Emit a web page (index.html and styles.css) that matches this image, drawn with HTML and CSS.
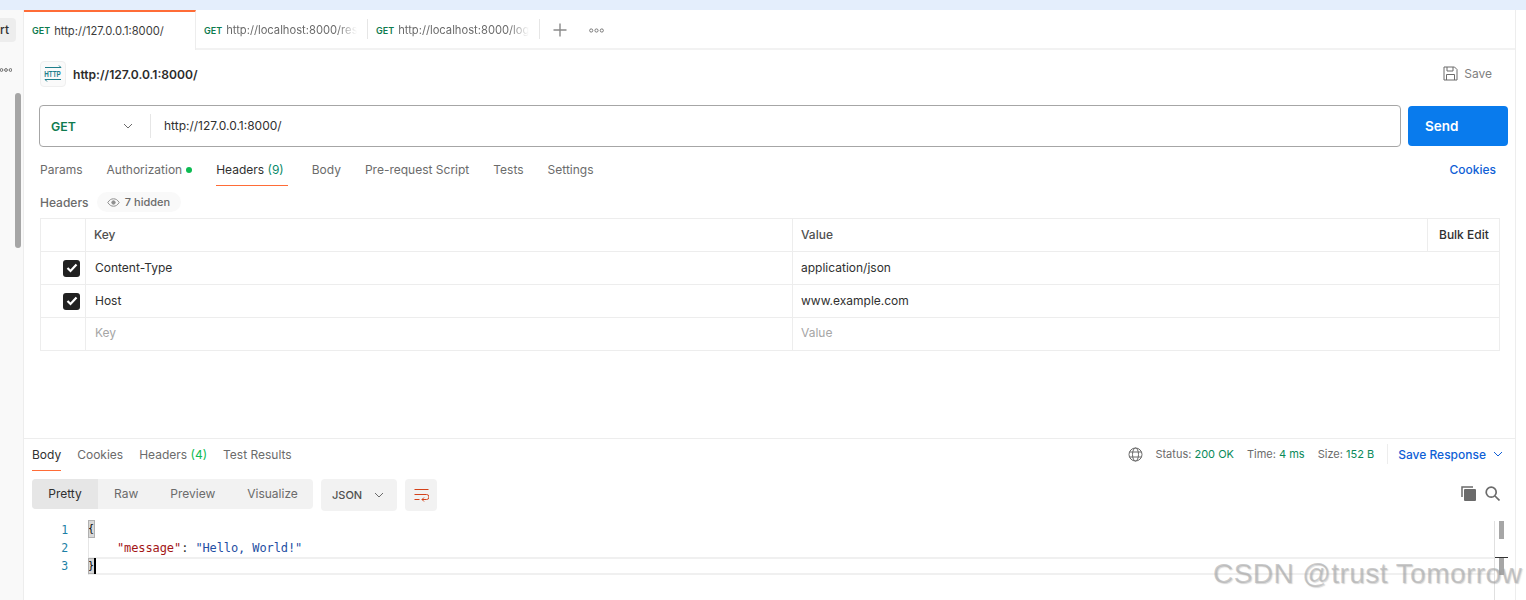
FILE: index.html
```html
<!DOCTYPE html>
<html lang="en">
<head>
<meta charset="utf-8">
<title>Postman</title>
<link rel="stylesheet" href="styles.css">
</head>
<body>
<div class="topstrip"></div>
<div class="app">
  <aside class="sidebar">
    <div class="side-chip"><span>rt</span></div>
    <svg class="side-dots" width="12" height="4" viewBox="0 0 12 4"><circle cx="1.5" cy="2" r="1.4"/><circle cx="6" cy="2" r="1.4"/><circle cx="10.5" cy="2" r="1.4"/></svg>
    <div class="side-thumb"></div>
  </aside>
  <main class="main">
    <nav class="tabbar">
      <div class="tab active"><span class="verb">GET</span><span class="tab-url">http://127.0.0.1:8000/</span></div>
      <div class="tab"><span class="verb">GET</span><span class="tab-url fade">http://localhost:8000/res</span></div>
      <div class="tab"><span class="verb">GET</span><span class="tab-url fade">http://localhost:8000/log</span></div>
      <svg class="tab-plus" width="14" height="14" viewBox="0 0 14 14"><path d="M7 .5v13M.5 7h13"/></svg>
      <svg class="tab-more" width="15" height="5" viewBox="0 0 15 5"><circle cx="2.2" cy="2.5" r="1.6"/><circle cx="7.5" cy="2.5" r="1.6"/><circle cx="12.8" cy="2.5" r="1.6"/></svg>
    </nav>

    <section class="request">
      <header class="req-head">
        <div class="req-title">
          <span class="http-icon">
            <svg width="20" height="20" viewBox="0 0 20 20"><path class="arrow" d="M2 3.500h16l-2-2M18 15.500H2l2 2"/><text x="13.570" y="13.500" text-anchor="middle" transform="scale(.7 1)">HTTP</text></svg>
          </span>
          <span class="req-name">http://127.0.0.1:8000/</span>
        </div>
        <div class="save">
          <svg width="15" height="15" viewBox="0 0 15 15"><path d="M1 1h10.500L14 3.500V14H1zM4 1v4h6V1M3.500 14V8.500h8V14"/></svg>
          <span>Save</span>
        </div>
      </header>

      <div class="url-row">
        <div class="url-box">
          <div class="method"><span>GET</span>
            <svg width="10" height="6" viewBox="0 0 10 6"><path d="M1 1l4 4 4-4"/></svg>
          </div>
          <div class="url-input">http://127.0.0.1:8000/</div>
        </div>
        <button class="send">Send</button>
      </div>

      <div class="req-tabs">
        <span class="rt">Params</span>
        <span class="rt">Authorization<i class="dot"></i></span>
        <span class="rt current">Headers <em>(9)</em></span>
        <span class="rt">Body</span>
        <span class="rt">Pre-request Script</span>
        <span class="rt">Tests</span>
        <span class="rt">Settings</span>
        <span class="cookies">Cookies</span>
      </div>

      <div class="hdr-label">
        <span class="hdr-name">Headers</span>
        <span class="hidden-pill">
          <svg width="13" height="9" viewBox="0 0 13 9"><path d="M.8 4.500C2.500 1.800 4.300.8 6.500.8s4 1 5.700 3.700C10.500 7.200 8.700 8.200 6.500 8.200S2.500 7.200.8 4.500z"/><circle cx="6.500" cy="4.500" r="1.700"/></svg>
          7 hidden
        </span>
      </div>

      <div class="table">
        <div class="row head">
          <div class="c check"></div>
          <div class="c key">Key</div>
          <div class="c value">Value</div>
          <div class="c bulk">Bulk Edit</div>
        </div>
        <div class="row">
          <div class="c check"><span class="box"><svg width="12" height="10" viewBox="0 0 12 10"><path d="M1.500 5l3 3 6-6.500"/></svg></span></div>
          <div class="c key body-cell">Content-Type</div>
          <div class="c value wide body-cell">application/json</div>
        </div>
        <div class="row">
          <div class="c check"><span class="box"><svg width="12" height="10" viewBox="0 0 12 10"><path d="M1.500 5l3 3 6-6.500"/></svg></span></div>
          <div class="c key body-cell">Host</div>
          <div class="c value wide body-cell">www.example.com</div>
        </div>
        <div class="row last">
          <div class="c check"></div>
          <div class="c key body-cell ph">Key</div>
          <div class="c value wide body-cell ph">Value</div>
        </div>
      </div>
    </section>

    <section class="response">
      <div class="res-top">
        <div class="res-tabs">
          <span class="rs current">Body</span>
          <span class="rs">Cookies</span>
          <span class="rs">Headers <em>(4)</em></span>
          <span class="rs">Test Results</span>
        </div>
        <div class="res-meta">
          <svg class="globe" width="15" height="15" viewBox="0 0 15 15"><circle cx="7.500" cy="7.500" r="6.500"/><ellipse cx="7.500" cy="7.500" rx="3" ry="6.500"/><path d="M1.500 5h12M1.500 10h12"/></svg>
          <span class="m first">Status: <b>200 OK</b></span>
          <span class="m">Time: <b>4 ms</b></span>
          <span class="m">Size: <b>152 B</b></span>
          <span class="save-res">Save Response
            <svg width="10" height="6" viewBox="0 0 10 6"><path d="M1 1l4 4 4-4"/></svg>
          </span>
        </div>
      </div>

      <div class="res-tools">
        <div class="segment">
          <span class="seg on">Pretty</span>
          <span class="seg raw">Raw</span>
          <span class="seg prev">Preview</span>
          <span class="seg vis">Visualize</span>
        </div>
        <div class="json-select">JSON
          <svg width="10" height="6" viewBox="0 0 10 6"><path d="M1 1l4 4 4-4"/></svg>
        </div>
        <div class="wrap-btn">
          <svg width="15" height="13" viewBox="0 0 15 13"><path d="M.5 .5h14M.5 5.500h12a2.500 2.500 0 0 1 0 5H8M10 8.500l-2 2 2 2M.5 10.500h5"/></svg>
        </div>
        <div class="tool-icons">
          <svg class="copy" width="15" height="15" viewBox="0 0 15 15"><path class="back" d="M1 11V1h11"/><rect x="3" y="3" width="12" height="12" rx="1"/></svg>
          <svg class="lens" width="15" height="15" viewBox="0 0 15 15"><circle cx="6.200" cy="6.200" r="5"/><path d="M10 10l4.500 4.500"/></svg>
        </div>
      </div>

      <div class="code">
        <div class="gutter">
          <span>1</span><span>2</span><span>3</span>
        </div>
        <div class="lines">
          <div class="line"><span class="brace">{</span></div>
          <div class="line"><span class="indent"></span><span class="k">"message"</span><span class="p">: </span><span class="s">"Hello, World!"</span></div>
          <div class="line active"><span class="brace">}</span><span class="caret"></span></div>
        </div>
        <div class="code-scroll">
          <i class="t1"></i>
          <i class="t2"></i>
        </div>
      </div>
    </section>
  </main>
  <div class="rail"></div>
</div>
<div class="watermark">CSDN @trust Tomorrow</div>
</body>
</html>
```
FILE: styles.css
```css
* { box-sizing: border-box; }
html, body { margin: 0; padding: 0; }
body {
  width: 1526px;
  height: 600px;
  overflow: hidden;
  background: #fff;
  color: #212121;
  font-family: Inter, "Liberation Sans", sans-serif;
  font-size: 12px;
  position: relative;
}
.topstrip { height: 10px; background: #e4eefc; }
.app { display: flex; height: 590px; }

/* sidebar */
.sidebar {
  width: 24px;
  flex: none;
  background: #f9f9f9;
  border-right: 1px solid #ededed;
  position: relative;
  overflow: hidden;
}
.side-chip {
  width: 16px;
  height: 24px;
  margin-top: 8px;
  background: #ededed;
  border-radius: 0 4px 4px 0;
  font-weight: 500;
  font-size: 12px;
  line-height: 24px;
  text-align: right;
  padding-right: 8px;
  color: #303030;
}
.side-chip span { display: block; margin-right: -1px; }
.side-dots { display: block; margin: 26px 0 0 0; fill: none; stroke: #6b6b6b; stroke-width: 1; }
.side-thumb { width: 6px; height: 155px; margin: 21px 0 0 15px; background: #a6a6a6; border-radius: 3px; }

/* tabs */
.main { width: 1491px; flex: none; display: flex; flex-direction: column; }
.rail { width: 11px; flex: none; border-left: 1px solid #ededed; }
.tabbar {
  height: 40px;
  flex: none;
  display: flex;
  align-items: center;
  border-bottom: 2px solid #f2f2f2;
}
.tab {
  width: 172px;
  height: 38px;
  flex: none;
  display: flex;
  align-items: center;
  padding: 2px 12px 0 8px;
  position: relative;
  overflow: hidden;
}
.tab::after {
  content: "";
  position: absolute;
  right: 0;
  top: 9px;
  width: 1px;
  height: 20px;
  background: #e6e6e6;
}
.tab.active {
  width: 172px;
  height: 40px;
  margin-bottom: -2px;
  background: #fff;
  border-top: 2px solid #ff6c37;
  border-right: 1px solid #ededed;
  padding-top: 0;
  padding-bottom: 1px;
  z-index: 1;
}
.tab.active::after { display: none; }
.verb { font-size: 9px; font-weight: 600; color: #0f7b4f; margin-right: 4px; letter-spacing: 0; flex: none; }
.tab-url { font-size: 11.200px; color: #3b3b3b; white-space: nowrap; }
.tab-url.fade {
  color: #6b6b6b;
  width: 131px;
  flex: none;
  -webkit-mask-image: linear-gradient(to right, #000 85%, transparent 100%);
  mask-image: linear-gradient(to right, #000 85%, transparent 100%);
}
.tab-plus { margin: 2px 0 0 13px; fill: none; stroke: #8a8a8a; stroke-width: 1.400; }
.tab-more { margin: 2px 0 0 22px; fill: none; stroke: #7a7a7a; stroke-width: 1; }

/* request */
.request { height: 388px; flex: none; padding: 0 15px 0 16px; }
.req-head {
  height: 38px;
  margin-top: 10px;
  display: flex;
  align-items: flex-start;
  justify-content: space-between;
}
.req-title { display: flex; align-items: center; gap: 7px; height: 28px; }
.http-icon {
  width: 26px;
  height: 26px;
  display: flex;
  align-items: center;
  justify-content: center;
  border: 1px solid #efefef;
  border-radius: 4px;
  background: #fafafa;
}
.http-icon .arrow { fill: none; stroke: #1f7f8c; stroke-width: 1; }
.http-icon text { font: 700 9px "Liberation Sans", sans-serif; fill: #1f7f8c; }
.req-name { font-size: 12.100px; font-weight: 600; color: #2b2b2b; }
.save { display: flex; align-items: center; gap: 6px; margin: 6px 8px 0 0; color: #808080; font-size: 12px; }
.save svg { fill: none; stroke: #6b6b6b; stroke-width: 1; }

.url-row { display: flex; gap: 7px; align-items: center; height: 42px; margin-top: 7px; margin-left: -1px; }
.url-box {
  flex: none;
  width: 1362px;
  height: 42px;
  display: flex;
  align-items: center;
  border: 1px solid #a6a6a6;
  border-radius: 4px;
}
.method {
  width: 111px;
  height: 24px;
  flex: none;
  display: flex;
  align-items: center;
  justify-content: space-between;
  padding: 0 17px 0 11px;
  border-right: 1px solid #e6e6e6;
  font-size: 12.300px;
  font-weight: 600;
  color: #0f7b4f;
}
.method svg { fill: none; stroke: #6b6b6b; stroke-width: 1; }
.url-input { padding-left: 13px; font-size: 12px; color: #303030; padding-bottom: 2px; }
.send {
  width: 100px;
  height: 40px;
  flex: none;
  border: 0;
  border-radius: 4px;
  background: #097bed;
  color: #fff;
  font: 600 13.500px Inter, "Liberation Sans", sans-serif;
  text-align: left;
  padding: 0 0 0 17px;
}

.req-tabs { display: flex; align-items: flex-start; gap: 24px; height: 39px; margin-top: 8px; padding-top: 7px; }
.rt { font-size: 12px; color: #6b6b6b; line-height: 16px; position: relative; padding-bottom: 8px; white-space: nowrap; }
.rt em { font-style: normal; color: #0a8a6a; }
.rt.current { color: #303030; padding: 0 4px 7px 0; border-bottom: 1px solid #ff6c37; margin: 0; }
.dot { display: inline-block; width: 6px; height: 6px; background: #0cbb52; border-radius: 50%; margin-left: 4px; vertical-align: 1px; }
.cookies { margin-left: auto; margin-right: 4px; font-size: 12px; font-weight: 500; color: #0f5fd6; line-height: 16px; }

.hdr-label { display: flex; align-items: center; gap: 8px; height: 20px; margin-top: -2px; }
.hdr-name { font-size: 12px; font-weight: 500; color: #6b6b6b; }
.hidden-pill {
  height: 20px;
  width: 84px;
  display: flex;
  align-items: center;
  justify-content: center;
  gap: 5px;
  background: #f9f9f9;
  border-radius: 10px;
  font-size: 11px;
  font-weight: 500;
  color: #6b6b6b;
}
.hidden-pill svg { fill: none; stroke: #8f8f8f; stroke-width: 1; }
.hidden-pill svg circle { fill: #8f8f8f; }

.table { width: 1460px; margin-top: 6px; border: 1px solid #ededed; border-bottom: 0; }
.row { display: flex; height: 33px; border-bottom: 1px solid #ededed; }
.c { display: flex; align-items: center; border-right: 1px solid #ededed; font-size: 12px; color: #303030; padding-left: 8px; padding-bottom: 1px; }
.head .c { padding-bottom: 2px; }
.last .c { padding-bottom: 3px; }
.c:last-child { border-right: 0; }
.check { width: 45px; flex: none; padding: 0 5px 0 0; justify-content: flex-end; }
.key { width: 707px; flex: none; font-weight: 500; color: #505050; }
.value { width: 635px; flex: none; font-weight: 500; color: #505050; }
.value.wide { width: auto; flex: 1; padding-left: 8px; }
.bulk { flex: 1; padding-left: 11px; font-weight: 500; color: #303030; font-size: 12px; }
.body-cell { font-weight: 400; color: #303030; padding-left: 9px; }
.ph { color: #a6a6a6; }
.box { width: 17px; height: 17px; background: #212121; border-radius: 3px; display: flex; align-items: center; justify-content: center; }
.box svg { fill: none; stroke: #fff; stroke-width: 2.200; }

/* response */
.response { flex: 1; border-top: 1px solid #ededed; padding: 0 8px; display: flex; flex-direction: column; }
.res-top { display: flex; justify-content: space-between; align-items: flex-start; height: 40px; }
.res-tabs { display: flex; gap: 16px; padding-top: 8px; }
.rs { font-size: 12px; color: #6b6b6b; line-height: 16px; height: 24px; padding-bottom: 7px; }
.rs em { font-style: normal; color: #0cbb52; }
.rs.current { color: #303030; border-bottom: 1px solid #ff6c37; }
.res-meta { display: flex; align-items: center; height: 32px; padding-right: 4px; margin-top: -1px; }
.globe { fill: none; stroke: #6b6b6b; stroke-width: 1; margin-right: 12px; }
.m { font-size: 11px; color: #6b6b6b; margin-right: 13px; }
.m b { font-weight: 400; color: #0a8a5a; }
.save-res {
  display: flex;
  align-items: center;
  gap: 6px;
  height: 20px;
  padding-left: 10px;
  border-left: 1px solid #ededed;
  color: #0f5fd6;
  font-size: 12px;
  font-weight: 500;
}
.save-res svg { fill: none; stroke: #0f5fd6; stroke-width: 1; margin-left: 1px; }

.res-tools { display: flex; align-items: flex-start; height: 42px; flex: none; }
.segment { width: 281px; height: 30px; display: flex; align-items: center; background: #f2f2f2; border-radius: 4px; overflow: hidden; font-size: 12px; color: #6b6b6b; }
.seg { height: 30px; line-height: 30px; }
.seg.on { width: 66px; background: #e6e6e6; color: #303030; text-align: center; }
.seg.raw { margin-left: 16px; }
.seg.prev { margin-left: 32px; }
.seg.vis { margin-left: 32px; }
.json-select {
  width: 76px;
  height: 32px;
  margin-left: 8px;
  display: flex;
  align-items: center;
  justify-content: space-between;
  padding: 0 13px 0 11px;
  background: #f2f2f2;
  border-radius: 4px;
  font-size: 11px;
  font-weight: 500;
  color: #505050;
}
.json-select svg { fill: none; stroke: #6b6b6b; stroke-width: 1; }
.wrap-btn { width: 32px; height: 32px; margin-left: 8px; background: #f2f2f2; border-radius: 4px; display: flex; align-items: center; justify-content: center; }
.wrap-btn svg { fill: none; stroke: #d4421a; stroke-width: 1; }
.tool-icons { margin-left: auto; display: flex; gap: 9px; padding: 7px 7px 0 0; }
.copy rect { fill: #6b6b6b; }
.copy .back { fill: none; stroke: #6b6b6b; stroke-width: 1.500; }
.lens { fill: none; stroke: #6b6b6b; stroke-width: 1.700; }

.code { display: flex; position: relative; font-family: "DejaVu Sans Mono", "Liberation Mono", monospace; font-size: 12px; letter-spacing: -.1px; height: 54px; }
.gutter { width: 56px; flex: none; display: flex; flex-direction: column; color: #1c7fa6; padding-right: 20px; text-align: right; font-size: 11.500px; }
.gutter span { height: 18px; line-height: 18px; }
.lines { flex: 1; border-left: 1px solid #e6e6e6; }
.line { height: 18px; line-height: 18px; white-space: pre; color: #303030; display: flex; align-items: flex-start; }
.indent { width: 28px; flex: none; }
.k { color: #a31515; }
.p { white-space: pre; }
.s { color: #1f4fa3; }
.brace { width: 5px; height: 16px; line-height: 16px; background: #d8d8d8; outline: 1px solid #b0b0b0; color: #000; font-size: 10px; letter-spacing: 0; text-indent: -1px; }
.line.active { border-top: 2px solid #f0f0f0; border-bottom: 2px solid #f0f0f0; height: 18px; margin-right: 13px; }
.line.active .brace { height: 14px; line-height: 14px; }
.caret { width: 2px; height: 16px; margin-top: -1px; background: #000; }
.code-scroll { position: absolute; right: -1px; top: 0; width: 14px; height: 80px; border-left: 1px solid #e0e0e0; }
.code-scroll i { position: absolute; left: 4px; width: 5px; background: #a6a6a6; display: block; }
.code-scroll .t1 { top: 0; height: 18px; }
.code-scroll .t2 { top: 36px; height: 18px; }
.code-scroll::after { content: ""; position: absolute; left: 0; right: 0; top: 36px; height: 1px; background: #333; }

.watermark {
  position: absolute;
  left: 1213px;
  top: 558px;
  font-family: "Liberation Sans", sans-serif;
  font-size: 28px;
  letter-spacing: .45px;
  color: rgba(170, 170, 170, .6);
  white-space: nowrap;
  text-shadow: 1px 1px 1px rgba(120, 120, 120, .3);
}
```
